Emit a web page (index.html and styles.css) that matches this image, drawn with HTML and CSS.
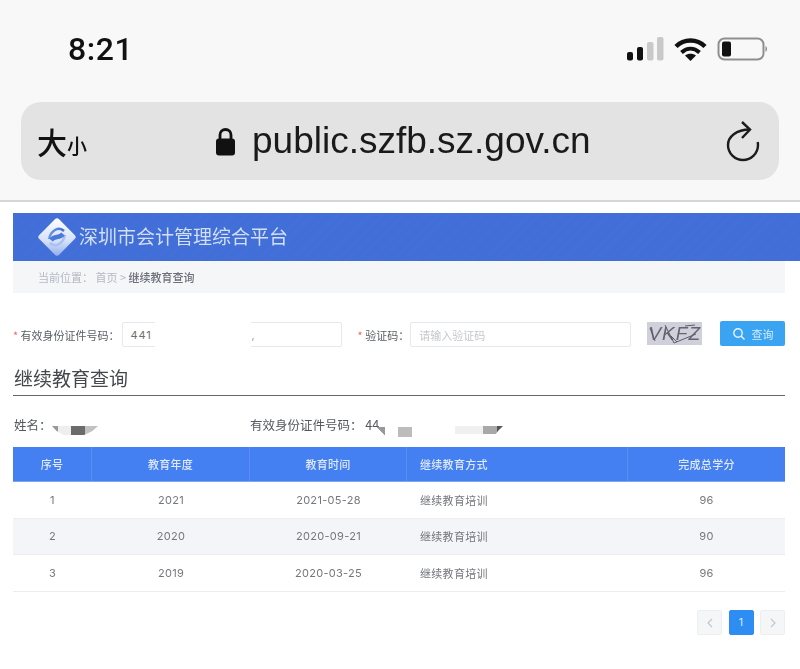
FILE: index.html
```html
<!DOCTYPE html>
<html lang="zh-CN">
<head>
<meta charset="utf-8">
<title>继续教育查询</title>
<link rel="stylesheet" href="styles.css">
</head>
<body>
<header class="chrome">
  <div class="status">
    <span class="time">8:21</span>
    <div class="status-icons">
      <svg width="37" height="24" viewBox="0 0 37 24"><rect x="0" y="15" width="6" height="8.500" rx="2" fill="#111"/><rect x="10" y="10" width="6" height="13.500" rx="2" fill="#111"/><rect x="20" y="5" width="6.500" height="18.500" rx="2" fill="#c9c9c9"/><rect x="30" y="0" width="6.500" height="23.500" rx="2" fill="#c9c9c9"/></svg>
      <svg width="33" height="24" viewBox="0 0 33 24"><path d="M2 9.500C10 1.500 23 1.500 31 9.500" fill="none" stroke="#111" stroke-width="4.500"/><path d="M7.500 15.500C13 10.500 20 10.500 25.500 15.500" fill="none" stroke="#111" stroke-width="4"/><path d="M16.500 24l-5.500-5.500c3-2.500 8-2.500 11 0z" fill="#111"/></svg>
      <svg width="51" height="24" viewBox="0 0 51 24"><rect x="1.500" y="1.500" width="45" height="21" rx="6" fill="none" stroke="#8f8f8f" stroke-width="2"/><rect x="5" y="4.500" width="9" height="15" rx="2" fill="#111"/><path d="M48.500 9c2 1 2 5 0 6z" fill="#8a8a8a"/></svg>
    </div>
  </div>
  <div class="address">
    <span class="size-btn">大<small>小</small></span>
    <div class="url">
      <svg width="21" height="29" viewBox="0 0 21 29"><path d="M5 13V8a5.500 5.500 0 0 1 11 0v5" fill="none" stroke="#111" stroke-width="2.800"/><rect x="1" y="11.500" width="19" height="17" rx="3" fill="#111"/></svg>
      <span>public.szfb.sz.gov.cn</span>
    </div>
    <svg class="reload" width="36" height="42" viewBox="0 0 36 42"><path d="M25 9.500C11 9.500 3 17 3 25a15 15 0 0 0 30 0c0-1-.1-2-.3-3" fill="none" stroke="#1c1c1c" stroke-width="2.400"/><path d="M17 2l8 7.500-8 8.500" fill="none" stroke="#1c1c1c" stroke-width="2.400"/></svg>
  </div>
</header>

<main class="page">
  <div class="banner">
    <svg class="logo" width="40" height="40" viewBox="0 0 40 40">
      <defs>
        <linearGradient id="lg" x1="0" y1="0" x2="1" y2="1"><stop offset="0" stop-color="#ffffff"/><stop offset="0.600" stop-color="#d5e1f9"/><stop offset="1" stop-color="#8fabea"/></linearGradient>
        <linearGradient id="sw" x1="0" y1="0" x2="1" y2="0"><stop offset="0" stop-color="#6f95e6"/><stop offset="1" stop-color="#3f6fd9"/></linearGradient>
      </defs>
      <rect x="6" y="6" width="28" height="28" rx="3" transform="rotate(45 20 20)" fill="url(#lg)"/>
      <path d="M12 22C14 13 22 9 27 14" fill="none" stroke="url(#sw)" stroke-width="2.500"/>
      <path d="M13 26C18 31 26 27 28 18" fill="none" stroke="#a9c0f0" stroke-width="2.500"/>
      <path d="M14 23C18 18 22 22 26 17" fill="none" stroke="#4a78dc" stroke-width="4.500"/>
    </svg>
    <span class="banner-title">深圳市会计管理综合平台</span>
  </div>
  <nav class="crumb">当前位置： 首页 &gt; <b>继续教育查询</b></nav>

  <form class="query">
    <label class="field-label"><i>*</i> 有效身份证件号码：</label>
    <div class="input id-input">441<span class="mask"></span><span class="mask-edge">,</span></div>
    <label class="field-label code-label"><i>*</i> 验证码：</label>
    <div class="input code-input">请输入验证码</div>
    <div class="captcha">
      <span>VKFZ</span>
      <svg class="scribble" width="55" height="23" viewBox="0 0 55 23"><path d="M3 6l5 13M18 3l9 18 22-9M30 20l-6-6M38 4l10-1" fill="none" stroke="#5e5a68" stroke-width="1"/></svg>
    </div>
    <button class="search" type="button">
      <svg width="14" height="14" viewBox="0 0 14 14"><circle cx="6" cy="6" r="4.200" fill="none" stroke="#e8f4ff" stroke-width="1.400"/><path d="M9 9l3.500 3.500" stroke="#e8f4ff" stroke-width="1.400"/></svg>
      查询
    </button>
  </form>

  <h2 class="section-title">继续教育查询</h2>

  <div class="info">
    <div class="info-name">姓名：</div>
    <div class="info-id">有效身份证件号码： 44</div>
    <span class="blot blot-a"></span>
    <span class="blot blot-t"></span>
    <span class="blot blot-b"></span>
    <span class="blot blot-c"></span>
  </div>

  <div class="table">
    <div class="row head"><span>序号</span><span>教育年度</span><span>教育时间</span><span class="left">继续教育方式</span><span>完成总学分</span></div>
    <div class="row"><span>1</span><span>2021</span><span>2021-05-28</span><span class="left">继续教育培训</span><span>96</span></div>
    <div class="row alt"><span>2</span><span>2020</span><span>2020-09-21</span><span class="left">继续教育培训</span><span>90</span></div>
    <div class="row"><span>3</span><span>2019</span><span>2020-03-25</span><span class="left">继续教育培训</span><span>96</span></div>
  </div>

  <div class="pager">
    <span class="pg"><svg width="8" height="10" viewBox="0 0 8 10"><path d="M6 1L2 5l4 4" fill="none" stroke="#c4c6ca" stroke-width="1.200"/></svg></span>
    <span class="pg on">1</span>
    <span class="pg"><svg width="8" height="10" viewBox="0 0 8 10"><path d="M2 1l4 4-4 4" fill="none" stroke="#c4c6ca" stroke-width="1.200"/></svg></span>
  </div>
</main>
</body>
</html>
```

FILE: styles.css
```css
* { box-sizing: border-box; }
html, body { margin: 0; padding: 0; background: #fff; }
body {
  width: 800px;
  height: 669px;
  overflow: hidden;
  font-family: "Liberation Sans", "Noto Sans CJK SC", sans-serif;
}

.chrome {
  height: 202px;
  background: #f8f8f8;
  border-bottom: 2px solid #d6d6d6;
  padding: 29px 21px 0;
}
.status {
  display: flex;
  justify-content: space-between;
  align-items: center;
  height: 40px;
  padding: 0 11px 0 47px;
  filter: blur(0.4px);
}
.time {
  font-family: "Roboto", "Liberation Sans", sans-serif;
  font-size: 32px;
  font-weight: 500;
  color: #111;
  letter-spacing: 0.600px;
}
.status-icons { display: flex; align-items: center; gap: 10px; }

.address {
  margin-top: 33px;
  height: 78px;
  width: 758px;
  background: #e3e3e3;
  border-radius: 20px;
  display: flex;
  align-items: center;
  padding: 0 18px 0 16px;
  filter: blur(0.4px);
}
.size-btn {
  width: 178px;
  font-family: "Noto Sans CJK SC", sans-serif;
  font-size: 30px;
  font-weight: 500;
  color: #111;
  line-height: 1;
}
.size-btn small { font-size: 20px; }
.url {
  flex: 1;
  display: flex;
  align-items: center;
  gap: 16px;
  font-family: "Liberation Sans", sans-serif;
  font-size: 37px;
  color: #1a1a1a;
}
.reload { flex: none; }

.page {
  padding: 11px 15px 0 13px;
  filter: blur(0.4px);
}

.banner {
  height: 48px;
  margin-right: -15px;
  background: repeating-linear-gradient(135deg, #3f6fd9 0 4px, #456fd6 4px 8px);
  display: flex;
  align-items: center;
  padding-left: 24px;
  gap: 2px;
}
.banner-title {
  font-family: "Noto Sans CJK SC", sans-serif;
  font-size: 19px;
  color: #d3dff6;
  padding-bottom: 3px;
}
.crumb {
  height: 32px;
  background: #f4f6f8;
  padding-left: 25px;
  display: flex;
  align-items: center;
  white-space: pre;
  font-size: 11px;
  color: #b3b8c2;
  font-family: "Noto Sans CJK SC", sans-serif;
}
.crumb b { font-weight: 500; color: #6c7079; }

.query {
  display: flex;
  align-items: center;
  height: 25px;
  margin-top: 29px;
}
.field-label {
  font-family: "Noto Sans CJK SC", sans-serif;
  font-size: 11px;
  color: #5c6066;
  white-space: nowrap;
}
.field-label i { color: #e66; font-style: normal; }
.input {
  height: 25px;
  border: 1px solid #e6e8ec;
  border-radius: 2px;
  background: #fff;
  display: flex;
  align-items: center;
  padding-left: 8px;
  font-size: 11px;
}
.id-input {
  position: relative;
  width: 220px;
  margin-left: 2px;
  color: #6e6e70;
  letter-spacing: 0.800px;
  font-family: "Inter", "Liberation Sans", sans-serif;
}
.mask {
  position: absolute;
  left: 32px;
  top: -2px;
  width: 96px;
  height: 29px;
  background: #fff;
}
.mask-edge {
  position: absolute;
  left: 129px;
  top: 5px;
  color: #9a9a9a;
}
.code-label { margin-left: 16px; }
.code-input {
  width: 221px;
  margin-left: 1px;
  font-family: "Noto Sans CJK SC", sans-serif;
  font-size: 11px;
  color: #c4c7cc;
}
.captcha {
  position: relative;
  width: 55px;
  height: 23px;
  margin-left: 16px;
  margin-top: -2px;
  background: #d0d0dc;
  display: flex;
  align-items: center;
  justify-content: center;
  overflow: hidden;
}
.captcha span {
  font-family: "Liberation Sans", sans-serif;
  font-style: italic;
  font-size: 19px;
  letter-spacing: 1px;
  color: #67636f;
}
.scribble { position: absolute; left: 0; top: 0; }
.search {
  width: 65px;
  height: 25px;
  margin-left: auto;
  margin-top: -2px;
  border: 0;
  border-radius: 2px;
  background: #3aa4f3;
  color: #d6ebfc;
  font-family: "Noto Sans CJK SC", sans-serif;
  font-size: 11px;
  display: flex;
  align-items: center;
  justify-content: center;
  gap: 6px;
  padding: 0;
}

.section-title {
  margin: 19px 0 0;
  height: 30px;
  border-bottom: 1px solid #666;
  font-family: "Noto Sans CJK SC", sans-serif;
  font-size: 19px;
  font-weight: 400;
  line-height: 24px;
  color: #44474c;
  padding-left: 1px;
}

.info {
  position: relative;
  display: flex;
  height: 30px;
  margin-top: 13px;
  align-items: center;
  font-family: "Noto Sans CJK SC", sans-serif;
  font-size: 12.500px;
  color: #55585e;
}
.info-name { width: 237px; padding-left: 1px; }
.blot { position: absolute; display: block; }
.blot-a {
  left: 39px;
  top: 17px;
  width: 46px;
  height: 9px;
  background: linear-gradient(90deg, #999 0 12%, #eee 12% 41%, #6b6b6b 41% 71%, #c2c2c2 71% 100%);
  clip-path: polygon(0 0, 100% 0, 88% 55%, 70% 100%, 25% 100%, 10% 55%);
}
.blot-t {
  left: 362px;
  top: 18px;
  width: 10px;
  height: 8px;
  background: linear-gradient(45deg, #fff 50%, #999 50%);
}
.blot-b {
  left: 385px;
  top: 18px;
  width: 14px;
  height: 10px;
  background: #bcbcbc;
}
.blot-c {
  left: 442px;
  top: 17px;
  width: 48px;
  height: 8px;
  background: linear-gradient(90deg, #f0f0f0 0 58%, #a8a8a8 58% 88%, #555 88% 100%);
  clip-path: polygon(0 0, 100% 0, 90% 60%, 85% 100%, 0 100%);
}

.table { margin-top: 8px; }
.row {
  display: grid;
  grid-template-columns: 79px 158px 157px 221px 157px;
  height: 36.500px;
  align-items: center;
  border-bottom: 1px solid #ebedf0;
  font-family: "Inter", "Liberation Sans", "Noto Sans CJK SC", sans-serif;
  font-size: 11px;
  color: #74777c;
  letter-spacing: 0.300px;
}
.row span { text-align: center; }
.row .left {
  text-align: left;
  padding-left: 13px;
  font-family: "Noto Sans CJK SC", sans-serif;
}
.row.alt { background: #f3f5f8; }
.row.head {
  height: 35px;
  background: #4580f3;
  border-bottom: 1px solid #7ba6f2;
  color: #dfe9fc;
  font-family: "Noto Sans CJK SC", sans-serif;
  font-weight: 500;
}
.row.head span {
  height: 100%;
  display: flex;
  align-items: center;
  justify-content: center;
  border-right: 1px solid #5a8ef3;
}
.row.head .left { justify-content: flex-start; }
.row.head span:last-child { border-right: 0; }

.pager {
  display: flex;
  justify-content: flex-end;
  gap: 6.500px;
  margin-top: 18.500px;
}
.pg {
  width: 25px;
  height: 25px;
  background: #f5f6f7;
  border: 1px solid #eceef0;
  border-radius: 2px;
  display: flex;
  align-items: center;
  justify-content: center;
  font-family: "Inter", "Liberation Sans", sans-serif;
  font-size: 10.500px;
}
.pg.on { background: #2e8df2; border-color: #2e8df2; color: #dcedff; }
```
